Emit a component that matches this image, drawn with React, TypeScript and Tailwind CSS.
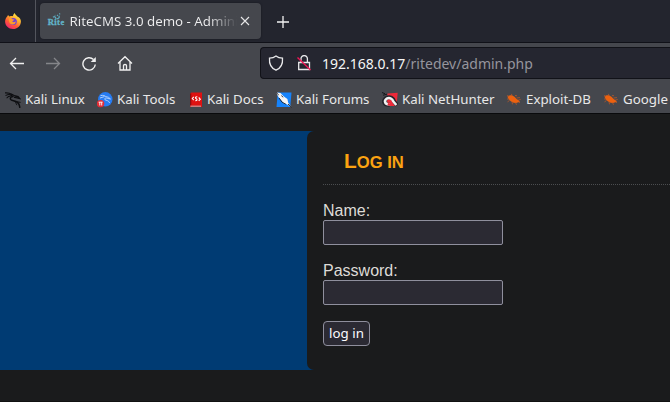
import React from "react";

function FirefoxLogo() {
  return (
    <svg width="16" height="16" viewBox="0 0 16 16">
      <defs>
        <linearGradient id="fire" x1="0.8" y1="0" x2="0.2" y2="1">
          <stop offset="0" stopColor="#fff44f" />
          <stop offset="0.35" stopColor="#ffb02e" />
          <stop offset="0.65" stopColor="#ff5a36" />
          <stop offset="1" stopColor="#f01e78" />
        </linearGradient>
      </defs>
      <path d="M2.4 3.2 3 2.1l1.4 1.5C5.6 3 7 3 8 3.2 8 2 8.7.7 9.7 0c.4 1.7 1.5 2.1 2.7 3.4C15 4.7 16 6.5 15.900 8.7 15.7 12.9 12.3 16 8 16 3.6 16 .1 12.7.1 8.5.1 6.4 1.2 4.3 2.4 3.2Z" fill="url(#fire)" />
      <circle cx="8.3" cy="8.4" r="3.5" fill="#7240d8" />
      <path d="M4 5.2c1.500-.3 2.800.1 3.500 1.100l1.800.2c-.2 1.100-1.800 1-2 1.900.8 1.200 2.800.8 3.500-.1-.2 2.500-1.900 3.700-4 3.200C4.500 10.900 3.400 8.200 4 5.200Z" fill="#ff9c2a" />
    </svg>
  );
}

function RiteLogo() {
  return (
    <svg width="16" height="16" viewBox="0 0 16 16" className="shrink-0 overflow-visible">
      <text x="-.3" y="11.700" fontSize="8.500" fontWeight="700" fontFamily="Liberation Serif, serif" fill="#62b4c9" stroke="#62b4c9" strokeWidth=".3" textLength="16.500">Rite</text>
      <path d="M5 4.200c1.800-1.300 3 .1 2.500 1.600M8.500 5.500c1.700.8 3.400-.9 2.500-2.700M9 2.700l1-.8M11.300 1.200l.8-.7M6.800 2.200l.5.3" stroke="#5da9bd" strokeWidth="1.300" fill="none" />
    </svg>
  );
}

function KaliLinuxIcon() {
  return (
    <svg width="16" height="16" viewBox="0 0 16 16" fill="none" stroke="#0d0e11" strokeLinecap="round">
      <path d="M.500.800C3 .700 5 1 6.500 2.300" strokeWidth="1.300" />
      <path d="M1 3.400C3 2.200 5 2.200 7 3.300M2 5.800C3 4.400 4.500 3.800 6.300 4" strokeWidth="1.100" />
      <path d="M6.500 2.500c1.700.200 2.500 1.300 4 1.500l2.600.5 1.700 2-2.700-.7-2.600-.4" strokeWidth="1.300" />
      <path d="M8 4.500C5.500 4.800 5 6.100 5.600 7.300c.9 1.600 3.600 1.100 5.800 2.400 2 .9 3 2.600 3.400 5.600" strokeWidth="1.500" />
      <path d="m12 9.800 3.200.5M10 9.800c1 1 1.200 2 1.700 3" strokeWidth="1" />
    </svg>
  );
}

function KaliToolsIcon() {
  return (
    <svg width="16" height="16" viewBox="0 0 16 16">
      <circle cx="8.300" cy="7.300" r="7.200" fill="#277cf3" />
      <path d="M3.500 3.600c2.800-.6 4.400.2 5.300 1l2.700.7 2 1.700-3-.6C8.500 5.500 7 6.500 8 7.700c1 .8 3.700.5 4.700 3.300M3 6l4.500-1.400" stroke="#bdd9ff" strokeWidth=".9" fill="none" />
      <circle cx="3.600" cy="11.600" r="3.700" fill="#e32c35" />
      <path d="M1.600 10.200h4M2.800 10.200v3.300M4.700 10.200v3.300" stroke="#fff" strokeWidth=".9" />
    </svg>
  );
}

function KaliDocsIcon() {
  return (
    <svg width="14" height="16" viewBox="0 0 14 16">
      <path d="M2.300.400H13V15H1V2Z" fill="#e01111" />
      <path d="M1 1.500h1.300v12H1Z" fill="#8f0b10" />
      <path d="M1.500 13.600H12v1.200H1.500Z" fill="#c39a9c" />
      <path d="M4.800 4.800 3.300 6.500l1.500 1.700M9.700 5.500l1.600 1.700-1.600 1.700M8.300 4.800c-2.300-.1-2.200 1.400-1 2s1 1.900-1 1.900" fill="none" stroke="#fff" strokeWidth="1.100" />
    </svg>
  );
}

function KaliForumsIcon() {
  return (
    <svg width="16" height="16" viewBox="0 0 16 16">
      <path d="M1.800.600h13.700L14.300 15H.500Z" fill="#1683fb" />
      <path d="m.2.600 4.300.5 3.400 3.300 3.500 2.600.8 3.800 3.300 4.500-4.700-3.100-3.200-1L5.300 8.500 2.300 4.800Z" fill="#f5f5f5" />
      <path d="m0 .400 2.700 2.500M3 6l3.100 4.200 3.700 2M12 12l3.500 3.300M5.500 3.500l1.500 1.800" stroke="#171b22" strokeWidth=".9" fill="none" />
    </svg>
  );
}

function KaliNetHunterIcon() {
  return (
    <svg width="16" height="16" viewBox="0 0 16 16">
      <path d="M5.500 1.600 15.700.700 14.500 14H5Z" fill="#ed2939" />
      <path d="M0 .500 3 1.700M1 3.200l4-1" stroke="#15171c" strokeWidth="1" />
      <path d="M7.500 12.800C1.500 13.300.500 8.600 4.200 6c3.800-2.100 7.500.5 8 3.500l2.700 3.700" fill="none" stroke="#24252c" strokeWidth="4" />
      <path d="M8 12.300C2.500 12.700 1.800 8.800 4.600 6.700c3.300-1.600 6 .3 6.700 2.800l3 3.500" fill="none" stroke="#f2f2f2" strokeWidth="2.500" />
      <path d="m6 11 2.200.200-.200 2.500-2.500-.500Z" fill="#ed2939" />
    </svg>
  );
}

function BugIcon() {
  return (
    <svg width="16" height="16" viewBox="0 0 16 16">
      <path d="M1.500 4.500c2-2 5-1.500 7 .3 1.500 1.200 2 2.800 4.200 3.500l1.200 1.400-1.700.5c-1.200 1.100-4.200 1.100-6.200-.2C4 9 2 7 1.500 4.500Z" fill="#ec610f" />
      <path d="m1 3.500 2 1M5.300 1.900l1 2M9 3.500l2 .3M10.500 6l3.500-.4M12 8.300l2.700-.9M12.500 10l1.500.7M9.500 10.500l1 2.300M6 9.500l.5 2.800M3.500 8.500l-2 1.400M1 7h2" stroke="#b6582a" strokeWidth=".8" />
    </svg>
  );
}

const bookmarks = [
  { label: "Kali Linux", width: "w-[92px]", icon: <KaliLinuxIcon /> },
  { label: "Kali Tools", width: "w-[92px]", icon: <KaliToolsIcon /> },
  { label: "Kali Docs", width: "w-[87px]", icon: <KaliDocsIcon /> },
  { label: "Kali Forums", width: "w-[106px]", icon: <KaliForumsIcon /> },
  { label: "Kali NetHunter", width: "w-[124px]", icon: <KaliNetHunterIcon /> },
  { label: "Exploit-DB", width: "w-[97px]", icon: <BugIcon /> },
  { label: "Google", width: "w-[66px]", icon: <BugIcon /> },
];

function TabStrip() {
  return (
    <div className="flex h-[43px] border-b border-[#101118] bg-[#23252e]">
      <div className="flex w-9 shrink-0 border-r border-[#53555d] pt-[13px] pl-[5px]"><FirefoxLogo /></div>
      <div className="mt-[3px] ml-1 flex h-9 w-[221px] items-center rounded bg-[#45474d] pl-2 shadow-[0_0_2px_#15161b]">
        <RiteLogo />
        <span className="mt-px ml-[5.500px] w-[167px] overflow-hidden bg-linear-to-r from-[#eeeeef] from-83% to-transparent bg-clip-text text-[13.3px] whitespace-nowrap text-transparent">RiteCMS 3.0 demo - Admini</span>
        <svg width="10" height="10" viewBox="0 0 10 10" className="ml-[3px]"><path d="m1 1 8 8M9 1 1 9" stroke="#e7e7e8" strokeWidth="1.100" /></svg>
      </div>
      <svg width="14" height="14" viewBox="0 0 14 14" className="mt-[15px] ml-[15px]"><path d="M7 1v12M1 7h12" stroke="#f2f2f2" strokeWidth="1.300" /></svg>
    </div>
  );
}

function NavBar() {
  return (
    <div className="flex h-[42px] bg-[#45474d]">
      <div className="flex w-[260px] shrink-0 gap-5 pt-3 pl-[9px]">
        <svg width="16" height="16" viewBox="0 0 16 16" fill="none" stroke="#f0f0f0" strokeWidth="1.300"><path d="M15 8.500H1.500M7 3 1.500 8.500 7 14" /></svg>
        <svg width="16" height="16" viewBox="0 0 16 16" fill="none" stroke="#85868a" strokeWidth="1.300"><path d="M1 8.500h13.500M9 3l5.500 5.500L9 14" /></svg>
        <svg width="16" height="16" viewBox="0 0 16 16" fill="none" stroke="#f0f0f0" strokeWidth="1.400"><path d="M12.500 4.500A6.200 6.200 0 1 0 14.300 9.500" /><path d="M14.800 2v5H9.700Z" fill="#f0f0f0" stroke="none" /></svg>
        <svg width="16" height="16" viewBox="0 0 16 16" fill="none" stroke="#f0f0f0" strokeWidth="1.300"><path d="m1 8.500 7-6.800 7 6.800M3 7v8h10V7M6.500 15v-4.500q0-1 1.500-1t1.500 1V15" /></svg>
      </div>
      <div className="mt-1 flex h-8 flex-1 items-center rounded-l border border-r-0 border-[#111218] bg-[#252630] pl-[7px]">
        <svg width="16" height="16" viewBox="0 0 16 16" fill="none" stroke="#e8e8ea" strokeWidth="1.300"><path d="M8 1Q10.500 3 14.500 3.200C15 9 12.500 13.200 8 15.200 3.500 13.200 1 9 1.500 3.200 5.500 3 8 1 8 1Z" /></svg>
        <svg width="16" height="16" viewBox="0 0 16 16" className="ml-3" fill="none" stroke="#e8e8ea" strokeWidth="1.300"><path d="M5 7V3.800a3.200 3.200 0 0 1 6.400 0V7M2.700 7.500h10.800v7H2.700Z" /><path d="m1.500 2.500 13 12.500" stroke="#f01655" strokeWidth="1.400" /></svg>
        <span className="ml-[10px] text-[14px] whitespace-nowrap text-[#95959d]"><span className="text-[#f5f5f5]">192.168.0.17</span>/ritedev/admin.php</span>
      </div>
    </div>
  );
}

function BookmarksBar() {
  return (
    <div className="flex h-[29px] border-b border-[#090a0c] bg-[#45474d] pl-[5px]">
      {bookmarks.map(({ label, width, icon }) => (
        <div key={label} className={`${width} flex h-[29px] shrink-0 items-center gap-1 text-[13.3px] whitespace-nowrap text-[#e8e8e8]`}>
          <span className="shrink-0">{icon}</span>{label}
        </div>
      ))}
    </div>
  );
}

export default function App() {
  return (
    <div className="flex h-[402px] w-[670px] flex-col overflow-hidden bg-[#1a1b1c] font-['Noto_Sans',sans-serif]">
      <TabStrip />
      <NavBar />
      <BookmarksBar />
      <main className="flex flex-1 flex-col border-b border-[#111] pt-[17px] font-['Liberation_Sans',Arial,sans-serif]">
        <div className="flex h-[239px] bg-linear-to-r from-[#003b73] from-[320px] to-[#1a1b1c] to-[320px]">
          <div className="w-[307px] shrink-0" />
          <form className="flex-1 rounded-l-[7px] bg-[#1a1b1c] pl-4 text-base text-[#dedbd7]" onSubmit={(e) => e.preventDefault()}>
            <h1 className="h-[54px] border-b border-dotted border-[#4b4d4f] pt-[18px] pl-[21px] text-[20.8px] leading-6 font-bold text-[#fca311]">L<span className="text-[16.640px] uppercase">og in</span></h1>
            <label className="mt-[17px] block leading-[18px]">Name:<input className="block h-[25px] w-[180px] rounded-xs border border-[#8f8f9d] bg-[#2b2a33]" /></label>
            <label className="mt-[17px] block leading-[18px]">Password:<input type="password" className="block h-[25px] w-[180px] rounded-xs border border-[#8f8f9d] bg-[#2b2a33]" /></label>
            <button className="mt-4 block h-[25px] w-[47px] rounded border border-[#8f8f9d] bg-[#2b2a33] font-['Noto_Sans',sans-serif] text-[13.3px] leading-[23px] whitespace-nowrap text-[#fbfbfe]">log in</button>
          </form>
        </div>
      </main>
    </div>
  );
}
